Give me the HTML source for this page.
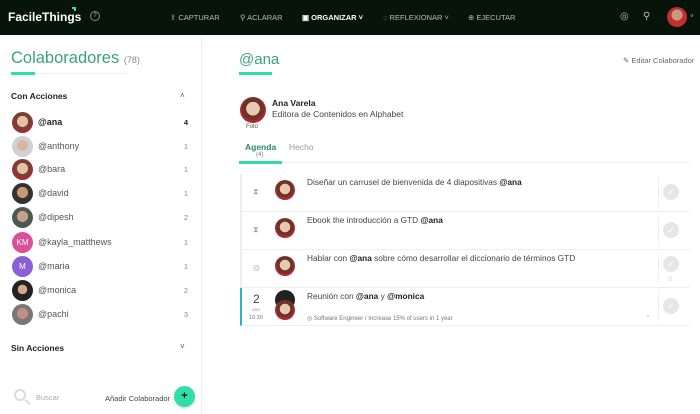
<!DOCTYPE html>
<html><head><meta charset="utf-8"><style>
*{margin:0;padding:0;box-sizing:border-box}
body{width:700px;height:414px;overflow:hidden;font-family:"Liberation Sans",sans-serif;background:#fff;position:relative;color:#333}
.hdr{position:absolute;left:0;top:0;width:700px;height:35px;background:#061409;color:#bbb;font-size:7.5px}
.hdr span{position:absolute;top:13px}
.side{position:absolute;left:0;top:35px;width:202px;height:379px;border-right:1px solid #eee}
.row{position:absolute;left:12px;width:176px;height:22px;font-size:9px;color:#555}
.av{position:absolute;left:0;top:0;width:21px;height:21px;border-radius:50%;background:radial-gradient(circle at 50% 45%,#e8c0a8 0 35%,#7a4030 36% 60%,#b02535 61%)}
.row .n{position:absolute;left:26px;top:5px}
.row .c{position:absolute;right:0;top:6px;font-size:7.5px;color:#888}
.ta{position:absolute;left:240px;width:450px;height:38px;border-bottom:1px solid #eee;border-left:2px solid #eee;font-size:8.3px}
.ta .a{position:absolute;left:33px;top:6px;width:20px;height:20px;border-radius:50%;background:radial-gradient(circle at 50% 45%,#e8c8b0 0 35%,#6a3525 36% 58%,#b52535 59%)}
.ta .t{position:absolute;left:65px;top:3px;color:#444}
.ta .ck{position:absolute;left:421px;top:10px;width:16px;height:16px;border-radius:50%;background:#e6e6e6;color:#fff;font-size:9px;text-align:center;line-height:16px}
.ta .sep{position:absolute;left:416px;top:3px;width:1px;height:30px;background:#eee}
.ta .ic{position:absolute;left:11px;top:13px;font-size:8px;color:#aaa}
b{color:#222}
</style></head><body>
<div class="hdr">
<span style="left:8px;top:10px;font-size:12px;color:#fff;font-weight:bold">FacileThings</span>
<span style="left:72px;top:7px;width:4px;height:4px;border-top:2px solid #2ee0a8;border-right:2px solid #2ee0a8"></span>
<span style="left:90px;top:11px;width:10px;height:10px;border:1px solid #888;border-radius:50%;font-size:6px;text-align:center;line-height:8px">?</span>
<span style="left:170px">⇪ CAPTURAR</span>
<span style="left:240px">⚲ ACLARAR</span>
<span style="left:302px;color:#fff;font-weight:bold">▣ ORGANIZAR ˅</span>
<span style="left:383px">◌ REFLEXIONAR ˅</span>
<span style="left:468px">⊕ EJECUTAR</span>
<span style="left:620px;font-size:10px;top:11px">◎</span>
<span style="left:643px;font-size:10px;top:11px">⚲</span>
<span style="left:667px;top:7px;width:20px;height:20px;border-radius:50%;background:radial-gradient(circle at 50% 40%,#c89880 0 35%,#c03030 36%)"></span>
<span style="left:690px;top:14px;font-size:6px">˅</span>
</div>
<div class="side">
<div style="position:absolute;left:11px;top:14px;font-size:16.5px;color:#3aa37a">Colaboradores <span style="font-size:9px;color:#888">(78)</span></div>
<div style="position:absolute;left:11px;top:37px;width:24px;height:3px;background:#2ee0a8"></div>
<div style="position:absolute;left:38px;top:38px;width:90px;height:1px;background:#f0f0f0"></div>
<div style="position:absolute;left:11px;top:56px;font-size:8.5px;font-weight:bold;color:#222">Con Acciones</div>
<div style="position:absolute;left:180px;top:56px;font-size:8px;color:#555">˄</div>
<div class="row" style="top:77px"><div class="av"></div><span class="n" style="font-weight:bold;color:#222">@ana</span><span class="c" style="font-weight:bold;color:#222">4</span></div>
<div class="row" style="top:101px"><div class="av" style="background:radial-gradient(circle at 50% 45%,#d8b8a0 0 35%,#d0d0d8 36%)"></div><span class="n">@anthony</span><span class="c">1</span></div>
<div class="row" style="top:124px"><div class="av"></div><span class="n">@bara</span><span class="c">1</span></div>
<div class="row" style="top:148px"><div class="av" style="background:radial-gradient(circle at 50% 45%,#c89870 0 35%,#333 36%)"></div><span class="n">@david</span><span class="c">1</span></div>
<div class="row" style="top:172px"><div class="av" style="background:radial-gradient(circle at 50% 45%,#c8a088 0 35%,#4a5a50 36%)"></div><span class="n">@dipesh</span><span class="c">2</span></div>
<div class="row" style="top:197px"><div class="av" style="background:#d8509a;color:#fff;font-size:8px;text-align:center;line-height:21px">KM</div><span class="n">@kayla_matthews</span><span class="c">1</span></div>
<div class="row" style="top:221px"><div class="av" style="background:#8a60d8;color:#fff;font-size:8px;text-align:center;line-height:21px">M</div><span class="n">@maria</span><span class="c">1</span></div>
<div class="row" style="top:245px"><div class="av" style="background:radial-gradient(circle at 50% 45%,#d0a890 0 30%,#222 31%)"></div><span class="n">@monica</span><span class="c">2</span></div>
<div class="row" style="top:269px"><div class="av" style="background:radial-gradient(circle at 50% 45%,#c09080 0 35%,#777 36%)"></div><span class="n">@pachi</span><span class="c">3</span></div>
<div style="position:absolute;left:11px;top:308px;font-size:8.5px;font-weight:bold;color:#222">Sin Acciones</div>
<div style="position:absolute;left:180px;top:307px;font-size:8px;color:#555">˅</div>
<div style="position:absolute;left:14px;top:354px;width:12px;height:12px;border:2px solid #ddd;border-radius:50%"></div>
<div style="position:absolute;left:24px;top:366px;width:7px;height:2px;background:#ddd;transform:rotate(45deg)"></div>
<div style="position:absolute;left:36px;top:358px;font-size:7.5px;color:#aaa">Buscar</div>
<div style="position:absolute;left:105px;top:359px;font-size:7.5px;color:#444">Añadir Colaborador</div>
<div style="position:absolute;left:174px;top:351px;width:21px;height:21px;border-radius:50%;background:#2ee0a8;color:#111;text-align:center;line-height:21px;font-weight:bold;font-size:11px;box-shadow:0 1px 3px rgba(0,0,0,.2)">+</div>
</div>
<div style="position:absolute;left:239px;top:51px;font-size:15px;color:#3aa37a">@ana</div>
<div style="position:absolute;left:239px;top:72px;width:33px;height:3px;background:#2ee0a8"></div>
<div style="position:absolute;left:623px;top:56px;font-size:7.5px;color:#666">✎ Editar Colaborador</div>
<div style="position:absolute;left:240px;top:97px;width:26px;height:26px;border-radius:50%;background:radial-gradient(circle at 50% 45%,#e8c8b0 0 35%,#6a3525 36% 58%,#b52535 59%)"></div>
<div style="position:absolute;left:246px;top:124px;font-size:6px;color:#555">Foto</div>
<div style="position:absolute;left:272px;top:98px;font-size:8.5px;font-weight:bold;color:#222">Ana Varela</div>
<div style="position:absolute;left:272px;top:109px;font-size:8.5px;color:#444">Editora de Contenidos en Alphabet</div>
<div style="position:absolute;left:245px;top:142px;font-size:8.5px;font-weight:bold;color:#2a8a5a">Agenda</div>
<div style="position:absolute;left:256px;top:152px;font-size:6px;color:#777">(4)</div>
<div style="position:absolute;left:289px;top:142px;font-size:8.5px;color:#999">Hecho</div>
<div style="position:absolute;left:239px;top:162px;width:451px;height:1px;background:#eee"></div>
<div style="position:absolute;left:239px;top:161px;width:43px;height:3px;background:#2ee0a8"></div>
<div class="ta" style="top:174px"><span class="ic">⧗</span><div class="a"></div><span class="t">Diseñar un carrusel de bienvenida de 4 diapositivas <b>@ana</b></span><div class="sep"></div><div class="ck">✓</div></div>
<div class="ta" style="top:212px"><span class="ic">⧗</span><div class="a"></div><span class="t">Ebook the introducción a GTD <b>@ana</b></span><div class="sep"></div><div class="ck">✓</div></div>
<div class="ta" style="top:250px"><span class="ic">◎</span><div class="a"></div><span class="t">Hablar con <b>@ana</b> sobre cómo desarrollar el diccionario de términos GTD</span><div class="sep"></div><div class="ck" style="top:6px">✓</div><span style="position:absolute;left:425px;top:25px;font-size:7px;color:#aaa">☆</span></div>
<div class="ta" style="top:288px;border-left-color:#2ab8c8"><span style="position:absolute;left:11px;top:4px;font-size:12px;color:#444">2</span><span style="position:absolute;left:10px;top:19px;font-size:4px;color:#999">ABR</span><span style="position:absolute;left:7px;top:27px;font-size:5.5px;color:#777">10:30</span><div class="a" style="top:2px;background:#222"></div><div class="a" style="top:12px"></div><span class="t">Reunión con <b>@ana</b> y <b>@monica</b></span><span style="position:absolute;left:65px;top:27px;font-size:6px;color:#777">◎ Software Engineer / Increase 15% of users in 1 year</span><span style="position:absolute;left:405px;top:26px;font-size:6px;color:#888">▫</span><div class="sep"></div><div class="ck" style="top:10px">✓</div></div>
</body></html>
